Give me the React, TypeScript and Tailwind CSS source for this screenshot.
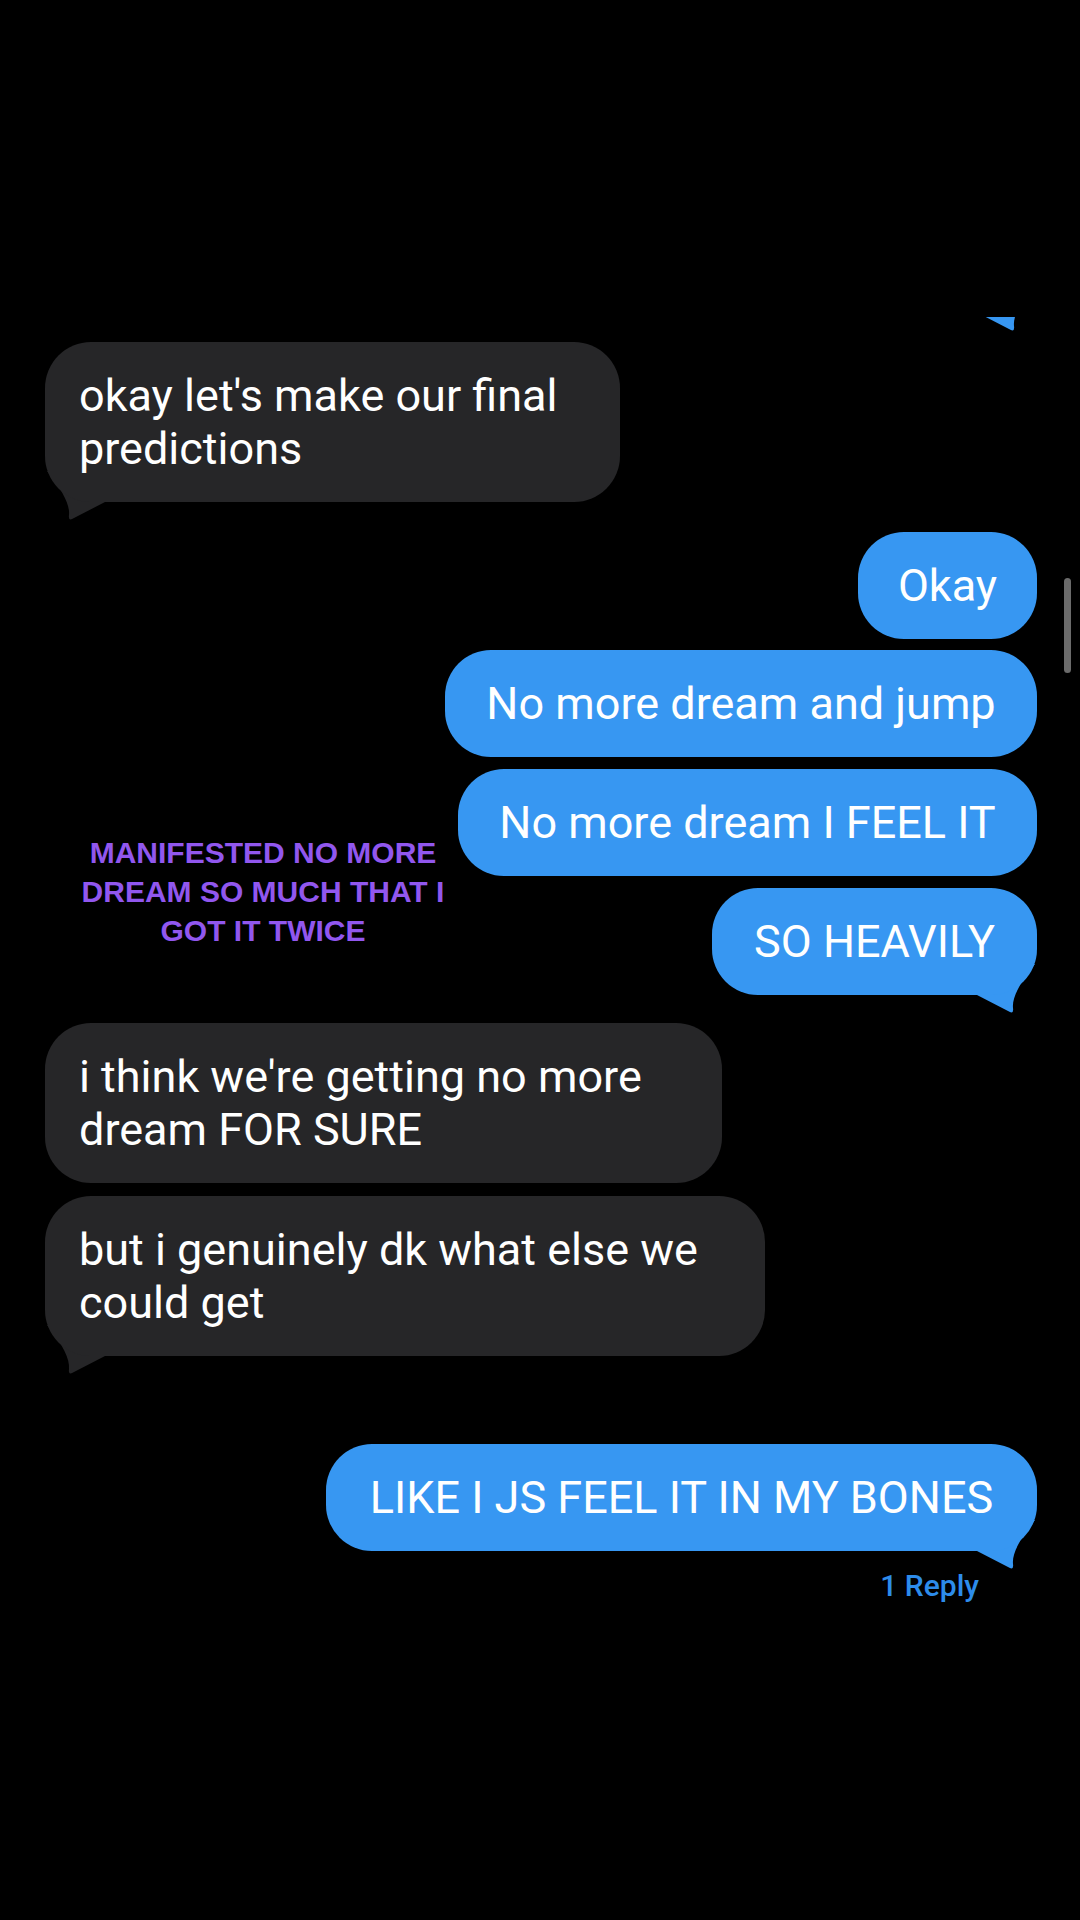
import type { ReactNode } from 'react';

// bubble tail, drawn for the right side; mirrored for received bubbles
const TAIL_PATH = 'M0 25 L31 41 Q37 45 36 38 C35 28 42 14 58 -6 L0 -6 Z';

function Tail({ side, color }: { side: 'left' | 'right'; color: string }) {
    return (
        <svg
            width="60"
            height="51"
            viewBox="0 -6 60 51"
            className={`absolute bottom-[-20px] ${side === 'right' ? 'right-0' : 'left-0 -scale-x-100'}`}
        >
            <path d={TAIL_PATH} fill={color} />
        </svg>
    );
}

interface BubbleProps {
    readonly children: ReactNode;
    readonly width: string;
    readonly tail?: boolean;
    readonly className?: string;
}

function Sent({ children, width, tail, className = '' }: BubbleProps) {
    return (
        <div className={`relative self-end mr-[43px] ${width} ${className}`}>
            {tail && <Tail side="right" color="#3797f2" />}
            <div className="relative rounded-[46px] bg-[#3797f2] py-[27px] text-center text-[45px] leading-[53px] text-white whitespace-nowrap">
                {children}
            </div>
        </div>
    );
}

function Received({ children, width, tail, className = '' }: BubbleProps) {
    return (
        <div className={`relative self-start ml-[45px] ${width} ${className}`}>
            {tail && <Tail side="left" color="#262628" />}
            <div className="relative rounded-[46px] bg-[#262628] py-[27px] pl-[34px] text-[45px] leading-[53px] text-white whitespace-nowrap">
                {children}
            </div>
        </div>
    );
}

export default function App() {
    return (
        <div className="relative min-h-[1920px] w-[1080px] overflow-hidden bg-black font-['Roboto','Liberation_Sans',sans-serif]">
            <div className="flex flex-col pt-[317px]">
                {/* tail of a sent bubble cut off by the top of the crop */}
                <div className="flex h-[16px] justify-end pr-[42px]">
                    <svg width="60" height="16" viewBox="0 29 60 16">
                        <path d={TAIL_PATH} fill="#3797f2" />
                    </svg>
                </div>

                <Received width="w-[575px]" tail className="mt-[9px]">
                    okay let's make our final
                    <br />
                    predictions
                </Received>

                <Sent width="w-[179px]" className="mt-[30px]">Okay</Sent>
                <Sent width="w-[592px]" className="mt-[11px]">No more dream and jump</Sent>
                <Sent width="w-[579px]" className="mt-[12px]">No more dream I FEEL IT</Sent>
                <Sent width="w-[325px]" tail className="mt-[12px]">SO HEAVILY</Sent>

                <Received width="w-[677px]" className="mt-[28px]">
                    i think we're getting no more
                    <br />
                    dream FOR SURE
                </Received>
                <Received width="w-[720px]" tail className="mt-[13px]">
                    but i genuinely dk what else we
                    <br />
                    could get
                </Received>

                <Sent width="w-[711px]" tail className="mt-[88px]">LIKE I JS FEEL IT IN MY BONES</Sent>
                <div className="mt-[18px] self-end mr-[101px] text-[30px] font-medium leading-[34px] text-[#2d8cea]">1 Reply</div>
            </div>

            {/* scroll indicator */}
            <div className="absolute left-[1064px] top-[578px] h-[95px] w-[7px] rounded-full bg-[#6b6b6b]" />

            {/* caption laid over the chat */}
            <div className="absolute left-[63px] top-[833px] w-[400px] text-center font-['Liberation_Sans',sans-serif] text-[30px] font-bold leading-[39px] text-[#9157ee]">
                MANIFESTED NO MORE
                <br />
                DREAM SO MUCH THAT I
                <br />
                GOT IT TWICE
            </div>
        </div>
    );
}
